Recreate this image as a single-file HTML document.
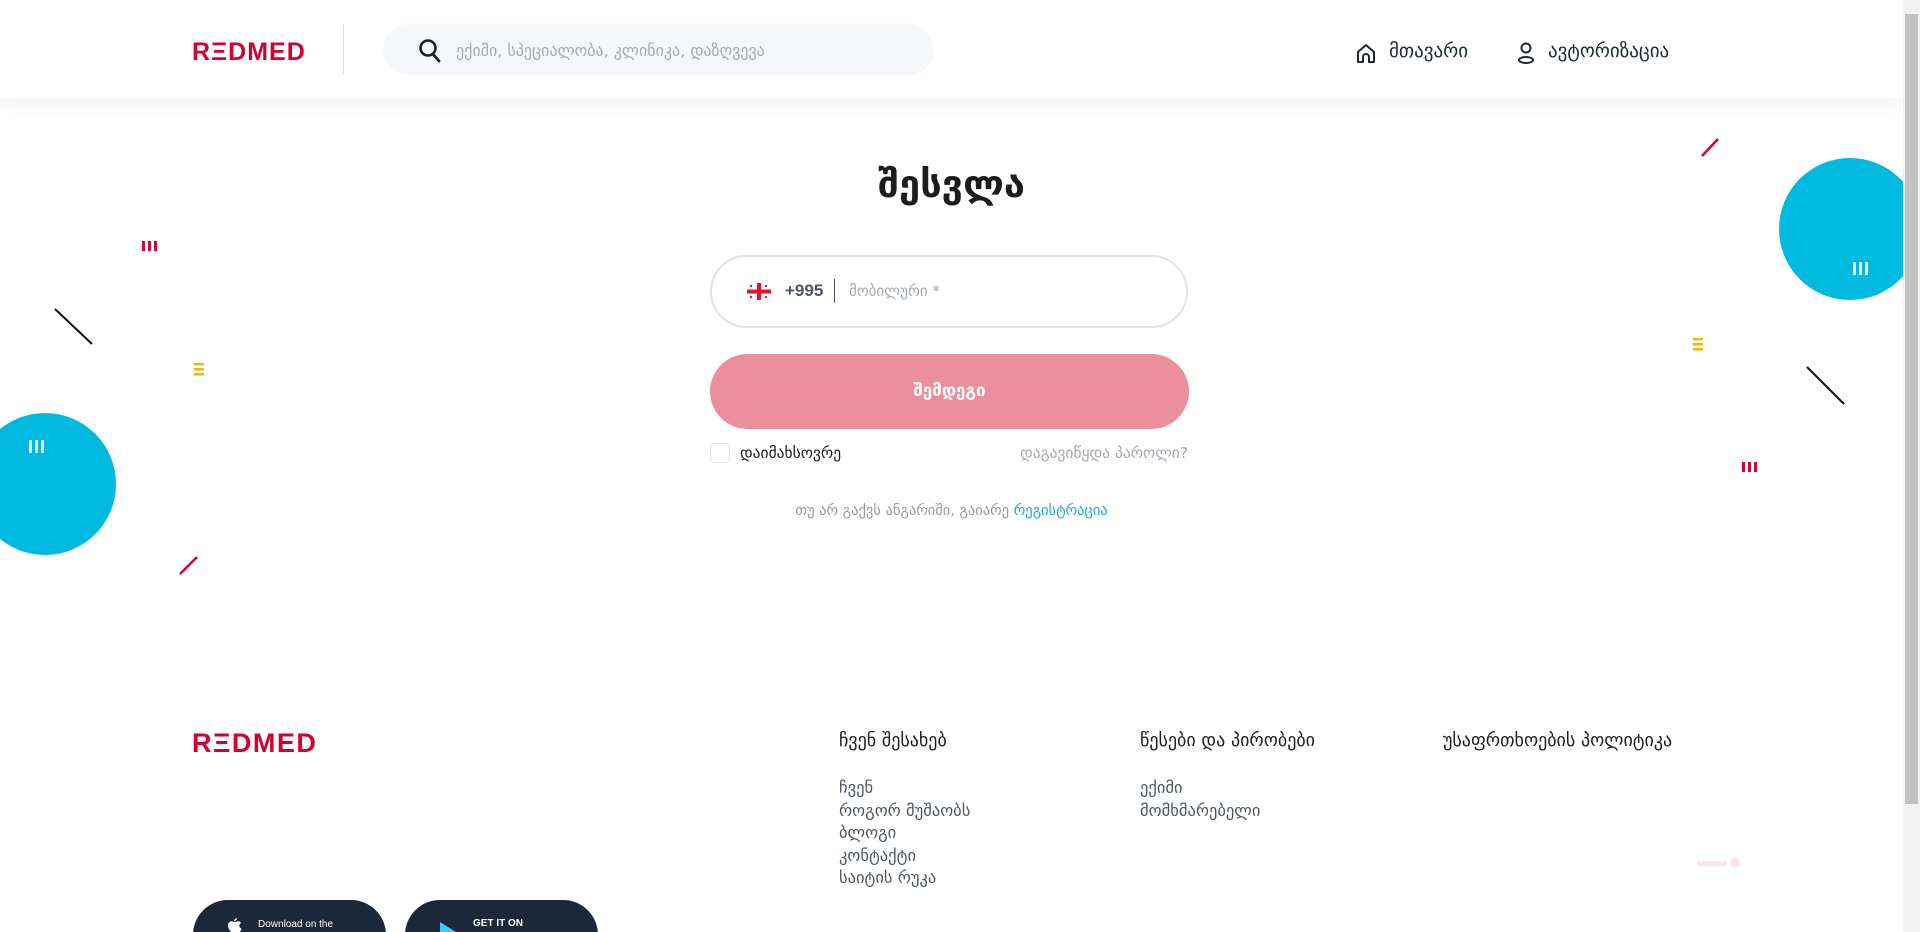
<!DOCTYPE html>
<html><head><meta charset="utf-8">
<style>
*{box-sizing:border-box;margin:0;padding:0}
html,body{width:1920px;height:932px;overflow:hidden;background:#fff;font-family:"Liberation Sans","DejaVu Sans",sans-serif;color:#1c2739}
#page{position:absolute;left:0;top:0;width:1903px;height:932px;overflow:hidden}
.sb{position:absolute;left:1903px;top:0;width:17px;height:932px;background:#f1f1f1}
.sb i{position:absolute;left:2px;top:14px;width:13px;height:790px;background:#c1c1c1}
header{position:absolute;left:0;top:0;width:1903px;height:98px;background:#fff;box-shadow:0 6px 22px rgba(0,0,0,.06);z-index:2}
.logo{position:absolute;color:#d50032;font-weight:bold;font-size:24px;letter-spacing:1px}
.abs{position:absolute}
.deco{position:absolute}
</style></head><body>
<div id="page">
<header>
  <div class="logo" style="left:192px;top:38px;font-size:25px">R<span style="letter-spacing:1px">Ξ</span>DMED</div>
  <div class="abs" style="left:343px;top:24px;width:1px;height:51px;background:#ddd"></div>
  <div class="abs" style="left:383px;top:24px;width:551px;height:51px;border-radius:26px;background:#f6f7fb"></div>
  <svg class="abs" style="left:418px;top:38px" width="24" height="26" viewBox="0 0 24 26"><circle cx="10" cy="10" r="7.5" fill="none" stroke="#1c2127" stroke-width="2.6"/><path d="M15 16l6 7" stroke="#1c2127" stroke-width="2.8" stroke-linecap="round"/></svg>
  <div class="abs" style="left:456px;top:41px;font-size:16px;color:#a4a9b4;font-family:'DejaVu Sans',sans-serif">ექიმი, სპეციალობა, კლინიკა, დაზღვევა</div>
  <svg class="abs" style="left:1355px;top:42px" width="22" height="22" viewBox="0 0 22 22"><path d="M3 20V10L11 3l8 7v10h-5v-5a3 3 0 0 0-6 0v5z" fill="none" stroke="#1c2739" stroke-width="2" stroke-linejoin="round"/></svg>
  <div class="abs" style="left:1389px;top:40px;font-size:19px;font-family:'DejaVu Sans',sans-serif">მთავარი</div>
  <svg class="abs" style="left:1516px;top:41px" width="20" height="24" viewBox="0 0 20 24"><circle cx="10" cy="7" r="4.5" fill="none" stroke="#1c2739" stroke-width="2"/><ellipse cx="10" cy="19" rx="7" ry="3" fill="none" stroke="#1c2739" stroke-width="2"/></svg>
  <div class="abs" style="left:1548px;top:40px;font-size:19px;font-family:'DejaVu Sans',sans-serif">ავტორიზაცია</div>
</header>

<div class="deco" style="left:1779px;top:158px;width:142px;height:142px;border-radius:50%;background:#00b9df"></div>
<div class="deco" style="left:1852px;top:259px;color:#fff;font-weight:bold;font-size:18px;letter-spacing:1px">III</div>
<div class="deco" style="left:-26px;top:413px;width:142px;height:142px;border-radius:50%;background:#00b9df"></div>
<div class="deco" style="left:28px;top:437px;color:#fff;font-weight:bold;font-size:18px;letter-spacing:1px">III</div>
<svg class="deco" style="left:0;top:0" width="1903" height="932">
<line x1="1702" y1="156" x2="1718" y2="139" stroke="#d50032" stroke-width="2.5"/>
<line x1="180" y1="574" x2="197" y2="557" stroke="#d50032" stroke-width="2.5"/>
<line x1="55" y1="309" x2="92" y2="344" stroke="#111" stroke-width="2"/>
<line x1="1807" y1="367" x2="1844" y2="404" stroke="#111" stroke-width="2"/>
<g fill="#d50032"><rect x="142" y="241" width="3" height="10"/><rect x="148" y="241" width="3" height="10"/><rect x="154" y="241" width="3" height="10"/>
<rect x="1742" y="462" width="3" height="10"/><rect x="1748" y="462" width="3" height="10"/><rect x="1754" y="462" width="3" height="10"/></g>
<g fill="#f7b500"><rect x="194" y="363" width="10" height="2.5"/><rect x="194" y="368" width="10" height="2.5"/><rect x="194" y="373" width="10" height="2.5"/>
<rect x="1693" y="338" width="10" height="2.5"/><rect x="1693" y="343" width="10" height="2.5"/><rect x="1693" y="348" width="10" height="2.5"/></g>
<rect x="1697" y="861" width="30" height="5" rx="2.5" fill="#fce4e8"/><circle cx="1735" cy="863" r="5" fill="#fce4e8"/>
</svg>

<div class="abs" style="left:0;width:1903px;top:162px;text-align:center;font-size:38px;font-weight:bold;color:#1c1c1c;font-family:'DejaVu Sans',sans-serif">შესვლა</div>
<div class="abs" style="left:710px;top:255px;width:478px;height:73px;border:2px solid #dfe2e8;border-radius:37px"></div>
<svg class="abs" style="left:747px;top:283px" width="24" height="17" viewBox="0 0 24 17"><rect x="10" y="0" width="4" height="17" fill="#e8112d"/><rect x="0" y="6.5" width="24" height="4" fill="#e8112d"/><g fill="#e8112d"><rect x="3" y="2" width="2" height="2"/><rect x="18" y="2" width="2" height="2"/><rect x="3" y="13" width="2" height="2"/><rect x="18" y="13" width="2" height="2"/></g></svg>
<div class="abs" style="left:785px;top:281px;font-size:17px;font-weight:bold;color:#4c5566">+995</div>
<div class="abs" style="left:834px;top:279px;width:1px;height:24px;background:#4c5566"></div>
<div class="abs" style="left:849px;top:282px;font-size:15px;color:#a4a9b4;font-family:'DejaVu Sans',sans-serif">მობილური *</div>
<div class="abs" style="left:710px;top:354px;width:479px;height:75px;border-radius:38px;background:#ec8f9c;color:#fff;text-align:center;line-height:75px;font-size:17px;font-weight:bold;font-family:'DejaVu Sans',sans-serif">შემდეგი</div>
<div class="abs" style="left:710px;top:443px;width:20px;height:20px;border:1px solid #e4e6ea;border-radius:4px"></div>
<div class="abs" style="left:740px;top:444px;font-size:15.5px;color:#1c1c1c;font-family:'DejaVu Sans',sans-serif">დაიმახსოვრე</div>
<div class="abs" style="right:715px;top:444px;font-size:15.5px;color:#a4a9b4;font-family:'DejaVu Sans',sans-serif">დაგავიწყდა პაროლი?</div>
<div class="abs" style="left:0;width:1903px;top:503px;text-align:center;font-size:14.5px;color:#999;font-family:'DejaVu Sans',sans-serif">თუ არ გაქვს ანგარიში, გაიარე <span style="color:#1aa6d9">რეგისტრაცია</span></div>

<div class="logo" style="left:192px;top:728px;font-size:27px;letter-spacing:1.5px">R<span>Ξ</span>DMED</div>
<div class="abs" style="left:839px;top:730px;font-size:18px;color:#1c1c1c;font-family:'DejaVu Sans',sans-serif;line-height:22px">ჩვენ შესახებ</div>
<div class="abs" style="left:839px;top:777px;font-size:16.5px;color:#4c5566;font-family:'DejaVu Sans',sans-serif;line-height:22.5px">ჩვენ<br>როგორ მუშაობს<br>ბლოგი<br>კონტაქტი<br>საიტის რუკა</div>
<div class="abs" style="left:1140px;top:730px;font-size:18px;color:#1c1c1c;font-family:'DejaVu Sans',sans-serif;line-height:22px">წესები და პირობები</div>
<div class="abs" style="left:1140px;top:777px;font-size:16.5px;color:#4c5566;font-family:'DejaVu Sans',sans-serif;line-height:22.5px">ექიმი<br>მომხმარებელი</div>
<div class="abs" style="left:1443px;top:730px;font-size:18px;color:#1c1c1c;font-family:'DejaVu Sans',sans-serif;line-height:22px">უსაფრთხოების პოლიტიკა</div>
<div class="abs" style="left:193px;top:900px;width:193px;height:70px;border-radius:35px;background:#1c2739"></div>
<svg class="abs" style="left:228px;top:918px" width="14" height="16" viewBox="0 0 14 16"><path d="M9 0c0 2-1.5 3-3 3 0-1.5 1.5-3 3-3zM7 4c1 0 2-.7 3-.7 1.5 0 2.5.8 3 1.7-2.5 1.3-2 4.8.5 5.6-.6 1.7-1.8 4.4-3.3 4.4-1 0-1.3-.6-2.5-.6s-1.6.6-2.6.6C3.400 15 0 11 0 7.500 0 4.800 1.800 3.300 3.600 3.300c1.100 0 2.200.7 3.400.7z" fill="#fff"/></svg>
<div class="abs" style="left:258px;top:919px;color:#fff;font-size:10px">Download on the</div>
<div class="abs" style="left:405px;top:900px;width:193px;height:70px;border-radius:35px;background:#1c2739"></div>
<svg class="abs" style="left:440px;top:922px" width="16" height="12"><path d="M0 0L16 10L0 12z" fill="#3bccff"/></svg>
<div class="abs" style="left:473px;top:918px;color:#fff;font-size:10px;font-weight:bold">GET IT ON</div>
</div>
<div class="sb"><i></i></div>
</body></html>
